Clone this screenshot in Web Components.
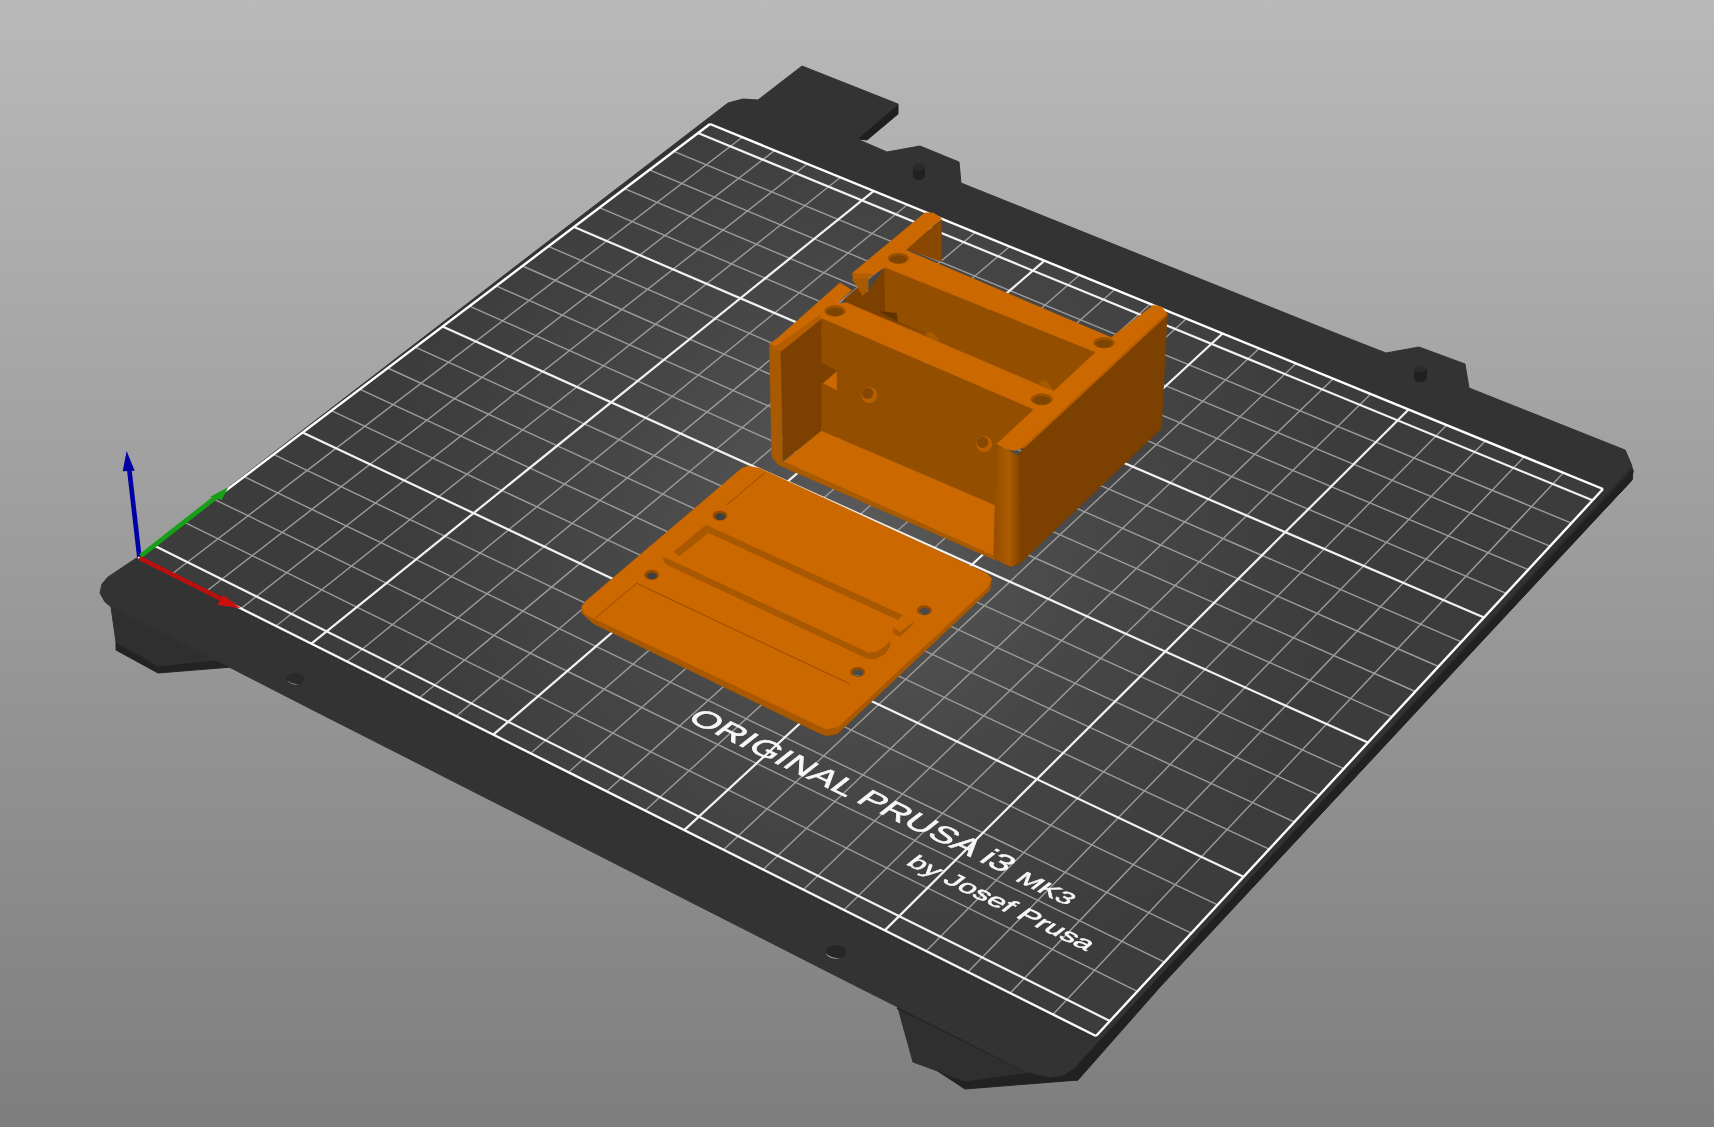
<!DOCTYPE html>
<html>
<head>
<meta charset="utf-8">
<title>Plater</title>
<style>
  html, body { margin: 0; padding: 0; width: 100%; height: 100%; overflow: hidden; background: #999; }
  body { font-family: "Liberation Sans", Arial, sans-serif; }
</style>
</head>
<body>
<plater-view>
  <print-bed></print-bed>
  <bed-logo></bed-logo>
  <printed-parts></printed-parts>
  <axes-gizmo></axes-gizmo>
</plater-view>

<script>
const LAYER_STYLE = `
  :host { display: block; grid-area: 1 / 1; width: 1714px; height: 1127px; }
  svg { display: block; width: 1714px; height: 1127px; filter: blur(0.4px); }
`;

const svgWrap = (inner) => `<svg xmlns="http://www.w3.org/2000/svg" viewBox="0 0 1714 1127">${inner}</svg>`;

const poly = (fill, pts, extra = '') => `<polygon fill="${fill}" stroke="${fill}" stroke-width="1" stroke-linejoin="round" points="${pts}" ${extra}/>`;

class PlaterView extends HTMLElement {
  constructor() {
    super();
    this.attachShadow({ mode: 'open' });
    this.shadowRoot.innerHTML = `
      <style>
        :host {
          display: grid;
          width: 1714px;
          height: 1127px;
          overflow: hidden;
          background: linear-gradient(to bottom, #b9b9b9 0%, #7e7e7e 100%);
        }
      </style>
      <slot></slot>
    `;
  }
}

class PrintBed extends HTMLElement {
  constructor() {
    super();
    this.attachShadow({ mode: 'open' });
    this.render();
  }

  // maps bed millimetres (250 x 210) on to the screen quad
  makeProjection() {
    const [x0, y0] = [138, 557];   // origin
    const [x1, y1] = [1096, 1036]; // x = 250
    const [x2, y2] = [1603, 489];  // x = 250, y = 210
    const [x3, y3] = [710, 124];   // y = 210
    const dx1 = x1 - x2, dx2 = x3 - x2, sx = x0 - x1 + x2 - x3;
    const dy1 = y1 - y2, dy2 = y3 - y2, sy = y0 - y1 + y2 - y3;
    const den = dx1 * dy2 - dx2 * dy1;
    const g = (sx * dy2 - dx2 * sy) / den;
    const h = (dx1 * sy - sx * dy1) / den;
    const a = x1 - x0 + g * x1, b = x3 - x0 + h * x3;
    const d = y1 - y0 + g * y1, e = y3 - y0 + h * y3;
    return (mmX, mmY) => {
      const u = mmX / 250, v = mmY / 210;
      const w = g * u + h * v + 1;
      return [(a * u + b * v + x0) / w, (d * u + e * v + y0) / w];
    };
  }

  gridLines() {
    const p = this.makeProjection();
    const seg = (ax, ay, bx, by) => {
      const [x1, y1] = p(ax, ay);
      const [x2, y2] = p(bx, by);
      return `M${x1.toFixed(1)} ${y1.toFixed(1)}L${x2.toFixed(1)} ${y2.toFixed(1)}`;
    };
    let minor = '';
    let major = '';
    for (let x = 10; x < 250; x += 10) {
      if (x % 50 === 0) major += seg(x, 0, x, 210);
      else minor += seg(x, 0, x, 210);
    }
    for (let y = 5; y < 210; y += 10) {
      if ((y - 5) % 50 === 0) major += seg(0, y, 250, y);
      else minor += seg(0, y, 250, y);
    }
    const border = seg(0, 0, 250, 0) + seg(250, 0, 250, 210) + seg(250, 210, 0, 210) + seg(0, 210, 0, 0);
    return { minor, major, border };
  }

  render() {
    const { minor, major, border } = this.gridLines();
    this.shadowRoot.innerHTML = `
      <style>${LAYER_STYLE}</style>
      ${svgWrap(`
        <defs>
          <radialGradient id="glow" gradientUnits="userSpaceOnUse" cx="860" cy="530" r="480">
            <stop offset="0" stop-color="#5a5a5a"/>
            <stop offset="0.5" stop-color="#474747"/>
            <stop offset="1" stop-color="#3c3c3c"/>
          </radialGradient>
        </defs>

        <!-- legs under the plate -->
        ${poly('#232323', '116,636 158,660 232,650 232,667 158,673 116,650')}
        ${poly('#2f2f2f', '110,600 240,662 215,660 158,666 116,642')}
        ${poly('#222222', '913,1055 965,1075 1060,1065 1078,1080 965,1089')}
        ${poly('#2f2f2f', '897,1004 1030,1072 965,1081 913,1062')}
        <path d="M897 1008L1027 1072" stroke="#232323" stroke-width="1.5" fill="none"/>

        <!-- right side band of the plate -->
        ${poly('#2a2a2a', '1625,450 1633,470 1632,480 1074,1072 1060,1076')}
        ${poly('#212121', '1633,470 1632,480 1160,987 1078,1080 1050,1080 1074,1068')}
        <!-- back notch thickness -->
        ${poly('#1f1f1f', '898,104 898,114 867,140 857,139')}

        <!-- top surface of the plate -->
        ${poly('#333333', `
          728,103 743,99 758,100 802,66 898,104 857,139 887,152 920,146 959,162 961,183
          1340,335 1386,353 1419,347 1465,364 1469,388 1625,450 1632,466
          1074,1068 1063,1075 1050,1077 1027,1072 860,988 313,710 110,606 105,602 100,593 102,584 108,577
          138,557`)}

        <!-- holes and posts -->
        <ellipse cx="295" cy="679" rx="9" ry="6" fill="#2a2a2a"/>
        <path d="M287 680a9 6 0 0 0 12 4a12 8 0 0 1 -12 -4z" fill="#b5b5b5"/>
        <ellipse cx="836" cy="952" rx="10" ry="7" fill="#262626"/>
        <path d="M826 953a10 7 0 0 0 14 5a13 8 0 0 1 -14 -5z" fill="#a5a5a5"/>
        <path d="M913 167h12v9a6 4 0 0 1 -12 0z" fill="#212121"/>
        <ellipse cx="919" cy="167" rx="6" ry="3.5" fill="#2a2a2a"/>
        <path d="M1414 369h13v9a6.500 4 0 0 1 -13 0z" fill="#202020"/>
        <ellipse cx="1420" cy="369" rx="6.500" ry="3.500" fill="#2b2b2b"/>

        <!-- printable area -->
        <polygon points="138,557 1096,1036 1603,489 710,124" fill="url(#glow)"/>
        <path d="${minor}" stroke="#9c9c9c" stroke-width="1.4" fill="none"/>
        <path d="${major}" stroke="#f2f2f2" stroke-width="2.2" fill="none"/>
        <path d="${border}" stroke="#ffffff" stroke-width="2.4" fill="none"/>
      `)}
    `;
  }
}

class BedLogo extends HTMLElement {
  constructor() {
    super();
    this.attachShadow({ mode: 'open' });
    this.shadowRoot.innerHTML = `
      <style>
        ${LAYER_STYLE}
        text { font-family: "Liberation Sans", Arial, sans-serif; fill: #f8f8f8; stroke: #f8f8f8; stroke-width: 0.4; }
      </style>
      ${svgWrap(`
        <text font-size="20" transform="matrix(1.68 0.81 -1.14 0.9 686 720)">ORIGINAL PRUSA i3</text>
        <text font-size="14.500" transform="matrix(1.78 0.86 -1.14 0.9 1014 880)">MK3</text>
        <text font-size="15.500" transform="matrix(1.77 0.85 -1.14 0.9 905 864)">by Josef Prusa</text>
      `)}
    `;
  }
}

class PrintedParts extends HTMLElement {
  constructor() {
    super();
    this.attachShadow({ mode: 'open' });
    this.render();
  }

  hole(cx, cy, rx, ry, back, rim) {
    return `
      <ellipse cx="${cx}" cy="${cy}" rx="${rx}" ry="${ry}" fill="${rim}"/>
      <ellipse cx="${cx}" cy="${cy + 3}" rx="${rx - 6}" ry="${ry - 5}" fill="${back}"/>`;
  }

  wallHole(cx, cy) {
    return `
      <circle cx="${cx}" cy="${cy}" r="24" fill="#b85f00"/>
      <circle cx="${cx - 5}" cy="${cy - 5}" r="17" fill="#874700"/>`;
  }

  boxParts() {
    const TOP = '#cc6800', WALL = '#934e00', DARK = '#7c4000', EDGE = '#a85a00';
    return `
      <defs>
        <linearGradient id="corner" gradientUnits="userSpaceOnUse" x1="765" y1="0" x2="840" y2="0">
          <stop offset="0" stop-color="#964f00"/>
          <stop offset="0.55" stop-color="#ad5b00"/>
          <stop offset="1" stop-color="#834400"/>
        </linearGradient>
      </defs>
      <!-- outer right face -->
      ${poly(DARK, '845,780 1282,372 1265,715 835,1125 800,1130 832,800')}
      <!-- left edge and inner left wall -->
      ${poly(EDGE, '88,465 125,482 128,820 95,800')}
      ${poly(DARK, '122,482 245,385 245,725 130,810')}
      <!-- floor -->
      ${poly(TOP, '130,815 245,722 765,945 762,1098')}
      <!-- front lip below floor -->
      ${poly(EDGE, '95,800 130,815 762,1098 770,1112 115,825')}
      <!-- back wall -->
      ${poly(WALL, '245,385 885,660 775,762 782,948 765,945 245,722')}
      <!-- rounded front corner -->
      <polygon fill="url(#corner)" points="765,945 775,765 810,782 838,800 840,1115 815,1130 785,1118 760,1100"/>
      <!-- far wall behind the back rail -->
      ${poly(WALL, '434,232 1075,490 945,605 320,338 400,300')}
      <!-- dark pocket at the left end -->
      ${poly(DARK, '310,330 350,295 378,312 432,236 435,365 470,372 472,395 560,432 400,372')}
      ${poly('#5f3200', '420,365 470,370 472,393')}
      <!-- far post inner face -->
      ${poly('#8a4700', '605,88 605,215 500,178')}
      <!-- far post and back rail top -->
      ${poly(TOP, '338,248 555,68 580,68 605,85 498,180 1120,445 1075,490 434,232 385,265 340,268')}
      ${poly('#b55e00', '338,248 340,268 385,265 400,255 384,250 355,253')}
      ${poly('#a85a00', '335,268 385,265 385,298 368,318 352,290')}
      <!-- left top rail -->
      ${poly(TOP, '88,462 112,445 300,278 335,300 245,385 125,482 110,478')}
      ${poly('#b55e00', '88,462 110,478 125,482 245,385 240,375 108,468')}
      <!-- bumps seen through the slot -->
      ${poly('#a85a00', '555,432 575,425 598,450 580,452')}
      ${poly('#a85a00', '895,578 918,570 945,605 930,600')}
      <!-- middle rail -->
      ${poly(TOP, '245,385 243,360 268,342 320,338 945,605 885,660')}
      <!-- front right rail -->
      ${poly(TOP, '1205,372 1240,345 1265,350 1282,372 852,772 825,782 800,778 770,762 1122,436')}
      <!-- rail side highlights -->
      <path d="M1282 372L852 772" stroke="#b55e00" stroke-width="6" fill="none"/>
      <!-- screw holes on top -->
      ${this.hole(285, 363, 32, 17, '#7f4400', '#9c5300')}
      ${this.hole(475, 205, 32, 17, '#7f4400', '#9c5300')}
      ${this.hole(1092, 458, 32, 17, '#7f4400', '#9c5300')}
      ${this.hole(905, 628, 33, 18, '#7f4400', '#9c5300')}
      <!-- holes through the wall -->
      ${this.wallHole(388, 615)}
      ${this.wallHole(733, 762)}
      <!-- notch in the wall -->
      ${poly(DARK, '243,518 290,542 248,580 243,576')}
      ${poly(TOP, '290,545 290,600 250,580')}
    `;
  }

  plateParts() {
    const TOP = '#cc6800', SIDE = '#a85800', LINE = '#8a4700';
    return `
      <!-- thickness -->
      ${poly(SIDE, '65,470 65,490 100,521 770,846 800,858 832,852 1290,420 1295,385 800,810')}
      <!-- top face -->
      ${poly(TOP, '65,470 75,455 545,55 565,48 600,55 1280,370 1295,385 1285,410 835,830 800,838 765,822 90,500 72,490')}
      <!-- scored lines -->
      <path d="M500 165L615 68M105 505L230 400L870 702" stroke="${LINE}" stroke-width="2.500" fill="none"/>
      <!-- slot -->
      ${poly(SIDE, '342,305 438,225 1027,495 1015,510 445,248 358,318')}
      ${poly(SIDE, '310,320 925,608 950,605 978,588 990,570 990,590 975,612 945,628 920,625 322,345 312,335')}
      <!-- little block at the slot end -->
      ${poly(SIDE, '1000,532 1020,545 1060,515 1060,522 1020,560 1000,550')}
      ${poly(TOP, '1000,532 1055,500 1060,515 1020,545')}
      <!-- through holes -->
      <ellipse cx="480" cy="197" rx="22" ry="15" fill="#904c00"/>
      <ellipse cx="481" cy="200" rx="15" ry="10" fill="#3f3f3f"/>
      <ellipse cx="275" cy="375" rx="22" ry="15" fill="#904c00"/>
      <ellipse cx="276" cy="378" rx="15" ry="10" fill="#3f3f3f"/>
      <ellipse cx="1093" cy="481" rx="22" ry="15" fill="#904c00"/>
      <ellipse cx="1094" cy="484" rx="15" ry="10" fill="#4a4a4a"/>
      <path d="M1080 486a15 9 0 0 0 20 6a14 9 0 0 1 -20 -6z" fill="#e0e0e0"/>
      <ellipse cx="893" cy="666" rx="22" ry="15" fill="#904c00"/>
      <ellipse cx="894" cy="669" rx="15" ry="10" fill="#4a4a4a"/>
      <path d="M880 671a15 9 0 0 0 20 6a14 9 0 0 1 -20 -6z" fill="#e0e0e0"/>
    `;
  }

  render() {
    this.shadowRoot.innerHTML = `
      <style>${LAYER_STYLE}</style>
      ${svgWrap(`
        <g transform="translate(560 450) scale(0.3333)">${this.plateParts()}</g>
        <g transform="translate(740 190) scale(0.3333)">${this.boxParts()}</g>
      `)}
    `;
  }
}

class AxesGizmo extends HTMLElement {
  constructor() {
    super();
    this.attachShadow({ mode: 'open' });
    this.shadowRoot.innerHTML = `
      <style>${LAYER_STYLE}</style>
      ${svgWrap(`
        <g transform="translate(80 430) scale(0.3333)">
          <path d="M178 380L148 120" stroke="#0000a6" stroke-width="14" fill="none"/>
          <polygon points="140,63 164,122 128,124" fill="#0000a6"/>
          <path d="M182 378L420 192" stroke="#17a017" stroke-width="14" fill="none"/>
          <polygon points="445,172 425,210 390,200" fill="#17a017"/>
          <path d="M178 384L430 510" stroke="#b80f0f" stroke-width="14" fill="none"/>
          <polygon points="482,535 430,495 412,525" fill="#cc0f0f"/>
        </g>
      `)}
    `;
  }
}

customElements.define('plater-view', PlaterView);
customElements.define('print-bed', PrintBed);
customElements.define('bed-logo', BedLogo);
customElements.define('printed-parts', PrintedParts);
customElements.define('axes-gizmo', AxesGizmo);
</script>
</body>
</html>
